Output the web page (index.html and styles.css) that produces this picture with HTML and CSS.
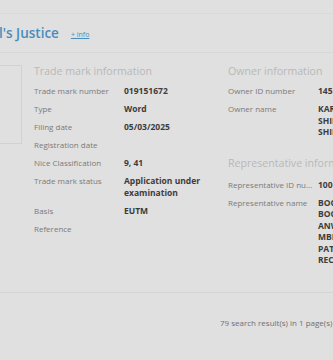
FILE: index.html
```html
<!DOCTYPE html>
<html>
<head>
<meta charset="utf-8">
<link rel="stylesheet" href="styles.css">
</head>
<body>
<div class="page">
  <header class="head">
    <h1 class="title">l's Justice</h1>
    <a class="more" href="#">+ info</a>
  </header>
  <section class="card">
    <div class="thumb"></div>
    <div class="col col-left">
      <h2 class="sec-title">Trade mark information</h2>
      <dl class="rows">
        <div class="row"><dt>Trade mark number</dt><dd>019151672</dd></div>
        <div class="row"><dt>Type</dt><dd>Word</dd></div>
        <div class="row"><dt>Filing date</dt><dd>05/03/2025</dd></div>
        <div class="row"><dt>Registration date</dt><dd></dd></div>
        <div class="row"><dt>Nice Classification</dt><dd>9, 41</dd></div>
        <div class="row"><dt>Trade mark status</dt><dd>Application under<br>examination</dd></div>
        <div class="row"><dt>Basis</dt><dd>EUTM</dd></div>
        <div class="row"><dt>Reference</dt><dd></dd></div>
      </dl>
    </div>
    <div class="col col-right">
      <h2 class="sec-title">Owner information</h2>
      <dl class="rows">
        <div class="row"><dt>Owner ID number</dt><dd>1451234</dd></div>
        <div class="row"><dt>Owner name</dt><dd>KARIM<br>SHIRIN<br>SHIRIN</dd></div>
      </dl>
      <h2 class="sec-title sec-gap">Representative information</h2>
      <dl class="rows">
        <div class="row"><dt class="trunc">Representative ID number</dt><dd>100123</dd></div>
        <div class="row"><dt>Representative name</dt><dd>BOCKHORNI<br>BOCKHORNI<br>ANWALTS<br>MBB<br>PATENT<br>RECHTS</dd></div>
      </dl>
    </div>
  </section>
  <footer class="foot">79 search result(s) in 1 page(s)</footer>
</div>
</body>
</html>
```
FILE: styles.css
```css
html, body {
  margin: 0;
  padding: 0;
  background: #e0e0e0;
  overflow: hidden;
  width: 333px;
  height: 360px;
}
body {
  font-family: "Open Sans", "Liberation Sans", sans-serif;
}
.page {
  width: 333px;
  padding-top: 13px;
}
.head {
  height: 40px;
  border-top: 1px solid #dadada;
  border-bottom: 1px solid #d8d8d8;
  display: flex;
  align-items: center;
  gap: 12px;
  box-sizing: border-box;
}
.title {
  margin: 0 0 0 -1px;
  font-size: 13.5px;
  font-weight: 600;
  color: #4a8dbd;
  line-height: 20px;
}
.more {
  font-size: 7px;
  color: #4a8dbd;
  text-decoration: underline;
  margin-top: 2px;
}
.card {
  display: flex;
  height: 240px;
  border-bottom: 1px solid #d4d4d4;
  box-sizing: border-box;
  padding-top: 10px;
}
.thumb {
  width: 23px;
  height: 79px;
  margin-top: 2px;
  margin-left: -1px;
  border: 1px solid #d2d2d2;
  box-sizing: border-box;
  flex: none;
}
.col {
  flex: none;
}
.col-left {
  width: 194px;
  margin-left: 12px;
}
.col-right {
  width: 200px;
}
.sec-title {
  margin: 0 0 6px;
  font-size: 10.6px;
  line-height: 16px;
  font-weight: 400;
  color: #b8b8b8;
  white-space: nowrap;
}
.sec-gap {
  margin-top: 17px;
  margin-bottom: 8px;
}
.rows {
  margin: 0;
}
.row {
  display: grid;
  grid-template-columns: 90px 1fr;
  margin-bottom: 6.5px;
  line-height: 11.5px;
}
dt {
  font-size: 8px;
  color: #7a7a7a;
}
.trunc {
  white-space: nowrap;
  overflow: hidden;
  text-overflow: ellipsis;
  width: 86px;
}
dd {
  margin: 0;
  font-size: 8.5px;
  font-weight: 700;
  color: #3c3c3c;
  white-space: nowrap;
}
.foot {
  text-align: left;
  padding-left: 220px;
  margin-top: 24px;
  font-size: 8px;
  color: #6f6f6f;
  white-space: nowrap;
}
```
